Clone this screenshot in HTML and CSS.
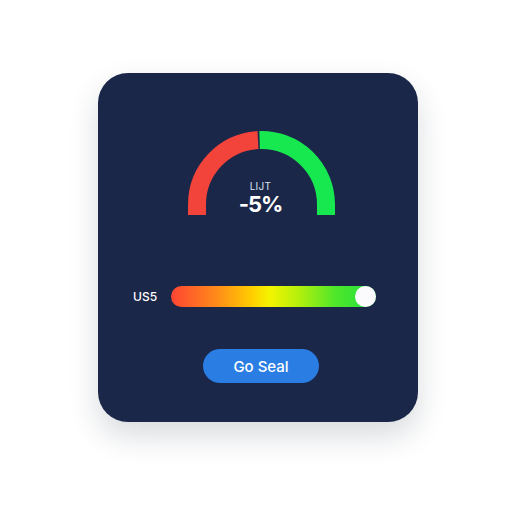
FILE: index.html
```html
<!DOCTYPE html>
<html>
<head>
<meta charset="utf-8">
<link rel="stylesheet" href="styles.css">
</head>
<body>
  <div class="card">
    <div class="gauge">
      <svg width="148" height="84" viewBox="0 0 148 84">
        <path d="M 9 84 L 9 73.5 A 64.5 64.5 0 0 1 70 9.1" fill="none" stroke="#f2443a" stroke-width="18"/>
        <path d="M 71.6 9.05 A 64.5 64.5 0 0 1 138 73.5 L 138 84" fill="none" stroke="#17e84f" stroke-width="18"/>
      </svg>
      <div class="gauge-text">
        <div class="gauge-label">LIJT</div>
        <div class="gauge-value">-5%</div>
      </div>
    </div>
    <div class="slider-row">
      <span class="slider-label">US5</span>
      <div class="track">
        <div class="knob"></div>
      </div>
    </div>
    <button class="cta">Go Seal</button>
  </div>
</body>
</html>
```
FILE: styles.css
```css
html, body {
  margin: 0;
  padding: 0;
  background: #ffffff;
  font-family: "Inter", "Liberation Sans", sans-serif;
}
body {
  padding: 73px 0 0 98px;
  min-height: 512px;
  box-sizing: border-box;
}
.card {
  width: 320px;
  height: 349px;
  box-sizing: border-box;
  background: #1b2749;
  border-radius: 30px;
  box-shadow: 0 14px 30px rgba(20, 30, 50, 0.16);
  display: flex;
  flex-direction: column;
  align-items: flex-start;
  padding-top: 58px;
}
.gauge {
  position: relative;
  width: 148px;
  height: 84px;
  margin-left: 90px;
}
.gauge svg {
  display: block;
}
.gauge-text {
  position: absolute;
  left: 0;
  right: 0;
  top: 50px;
  display: flex;
  flex-direction: column;
  align-items: center;
  gap: 2px;
  color: #ffffff;
  padding-right: 3px;
}
.gauge-label {
  font-size: 10px;
  line-height: 10px;
  color: #dfe3ec;
  letter-spacing: 0.3px;
}
.gauge-value {
  font-size: 22px;
  line-height: 22px;
  font-weight: 700;
  letter-spacing: -1px;
}
.slider-row {
  margin-top: 71px;
  margin-left: 35px;
  display: flex;
  align-items: center;
  gap: 13px;
}
.slider-label {
  color: #ffffff;
  font-size: 12px;
  font-weight: 500;
  width: 25px;
}
.track {
  position: relative;
  width: 205px;
  height: 21px;
  border-radius: 11px;
  background: linear-gradient(90deg, #ff4433 0%, #ff8a1a 22%, #ffd000 40%, #f4f400 48%, #b6f00c 62%, #50e62a 80%, #1fe040 100%);
}
.knob {
  position: absolute;
  right: 0;
  top: 0;
  width: 21px;
  height: 21px;
  border-radius: 50%;
  background: #fbfbfd;
}
.cta {
  margin-top: 42px;
  margin-left: 105px;
  width: 116px;
  height: 34px;
  border: none;
  border-radius: 17px;
  background: #2a7de2;
  color: #ffffff;
  font-family: "Inter", "Liberation Sans", sans-serif;
  font-size: 15px;
  font-weight: 500;
  padding: 0;
}
```
